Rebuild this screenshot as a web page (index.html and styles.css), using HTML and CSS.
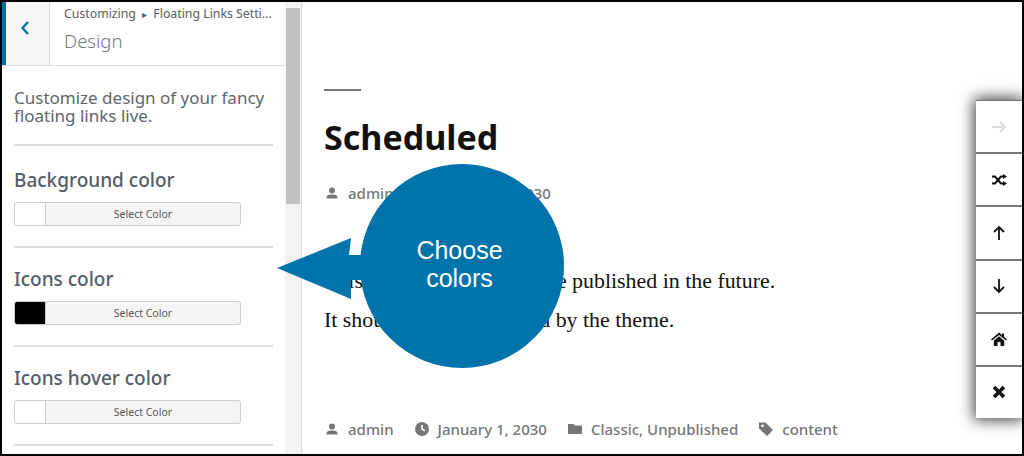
FILE: index.html
```html
<!DOCTYPE html>
<html lang="en">
<head>
	<meta charset="UTF-8">
	<title>Choose colors</title>
	<link rel="stylesheet" href="styles.css">
</head>
<body>
	<div class="frame">
		<aside class="sidebar">
			<div class="panel">
				<header class="panel-head">
					<a class="back" href="#">
						<svg width="10" height="16" viewBox="0 0 10 16"><path d="M8 2 L2.5 8 L8 14" fill="none" stroke="#0073aa" stroke-width="2.4"/></svg>
					</a>
					<div class="crumbs">
						<div class="crumb-line">Customizing <span class="crumb-sep">▸</span> Floating Links Setti...</div>
						<div class="panel-title">Design</div>
					</div>
				</header>
				<div class="panel-body">
					<p class="intro">Customize design of your fancy floating links live.</p>
					<section class="control">
						<h3>Background color</h3>
						<button class="picker"><span class="swatch"></span><span class="picker-text">Select Color</span></button>
					</section>
					<section class="control">
						<h3>Icons color</h3>
						<button class="picker"><span class="swatch swatch-black"></span><span class="picker-text">Select Color</span></button>
					</section>
					<section class="control">
						<h3>Icons hover color</h3>
						<button class="picker"><span class="swatch"></span><span class="picker-text">Select Color</span></button>
					</section>
				</div>
			</div>
			<div class="scrollbar"><div class="thumb"></div></div>
		</aside>

		<main class="preview">
			<div class="rule"></div>
			<h1>Scheduled</h1>
			<div class="meta meta-top">
				<span class="meta-item">
					<svg class="meta-icon" viewBox="0 0 16 16"><circle cx="8" cy="5.5" r="3"/><path d="M2.5 13.5 V12 C2.5 10.2 5.5 9.5 8 9.5 C10.5 9.5 13.5 10.2 13.5 12 V13.5 Z"/></svg>
					admin
				</span>
				<span class="meta-item">
					<svg class="meta-icon" viewBox="0 0 16 16"><path fill-rule="evenodd" d="M8 1 A7 7 0 1 0 8 15 A7 7 0 1 0 8 1 Z M7.2 4 H8.8 V7.6 L11.4 9.2 L10.6 10.5 L7.2 8.5 Z"/></svg>
					January 1, 2030
				</span>
			</div>
			<div class="post-text">
				<p>This post is scheduled to be published in the future.</p>
				<p>It should not be displayed by the theme.</p>
			</div>
			<div class="meta meta-bottom">
				<span class="meta-item">
					<svg class="meta-icon" viewBox="0 0 16 16"><circle cx="8" cy="5.5" r="3"/><path d="M2.5 13.5 V12 C2.5 10.2 5.5 9.5 8 9.5 C10.5 9.5 13.5 10.2 13.5 12 V13.5 Z"/></svg>
					admin
				</span>
				<span class="meta-item">
					<svg class="meta-icon" viewBox="0 0 16 16"><path fill-rule="evenodd" d="M8 1 A7 7 0 1 0 8 15 A7 7 0 1 0 8 1 Z M7.2 4 H8.8 V7.6 L11.4 9.2 L10.6 10.5 L7.2 8.5 Z"/></svg>
					January 1, 2030
				</span>
				<span class="meta-item">
					<svg class="meta-icon" viewBox="0 0 16 16"><path d="M1 3 H6.5 L8 4.5 H15 V13 H1 Z"/></svg>
					Classic, Unpublished
				</span>
				<span class="meta-item">
					<svg class="meta-icon" viewBox="0 0 16 16"><path fill-rule="evenodd" d="M1 1.5 H7.5 L15 9 L9 15 L1 7.5 Z M4.5 3.5 A1.3 1.3 0 1 0 4.5 6.1 A1.3 1.3 0 1 0 4.5 3.5 Z"/></svg>
					content
				</span>
			</div>
		</main>

		<nav class="float-bar">
			<a href="#" class="float-link">
				<svg width="16" height="16" viewBox="0 0 16 16"><path d="M1 8 H14 M9 3 L14 8 L9 13" fill="none" stroke="#ddd" stroke-width="2"/></svg>
			</a>
			<a href="#" class="float-link">
				<svg width="16" height="16" viewBox="0 0 16 16"><path d="M1 4.5 H4 L10 11.5 H13 M1 11.5 H4 L10 4.5 H13" fill="none" stroke="#111" stroke-width="2"/><path d="M12 2 L16 4.5 L12 7 Z M12 9 L16 11.5 L12 14 Z" fill="#111"/></svg>
			</a>
			<a href="#" class="float-link">
				<svg width="16" height="16" viewBox="0 0 16 16"><path d="M8 15 V2 M3 7 L8 2 L13 7" fill="none" stroke="#111" stroke-width="1.8"/></svg>
			</a>
			<a href="#" class="float-link">
				<svg width="16" height="16" viewBox="0 0 16 16"><path d="M8 1 V14 M3 9 L8 14 L13 9" fill="none" stroke="#111" stroke-width="1.8"/></svg>
			</a>
			<a href="#" class="float-link">
				<svg width="16" height="16" viewBox="0 0 16 16"><path d="M8 1.5 L11 4 V2.5 H13 V5.8 L16 8.5 L15 9.6 L8 4 L1 9.6 L0 8.5 Z M2.8 9.8 L8 5.2 L13.2 9.8 V15 H9.5 V11 H6.5 V15 H2.8 Z" fill="#111"/></svg>
			</a>
			<a href="#" class="float-link">
				<svg width="16" height="16" viewBox="0 0 16 16"><path d="M3 3 L13 13 M13 3 L3 13" fill="none" stroke="#111" stroke-width="3.6"/></svg>
			</a>
		</nav>

		<div class="callout">
			<svg class="callout-arrow" width="90" height="64" viewBox="0 0 90 64"><path d="M0 30 L74 0 L72 17 H90 V42 H74 V61 Z" fill="#0073aa"/></svg>
			<div class="callout-circle">Choose<br>colors</div>
		</div>
	</div>
</body>
</html>
```

FILE: styles.css
```css
* {
	margin: 0;
	padding: 0;
	box-sizing: border-box;
}
body {
	width: 1024px;
	height: 456px;
	overflow: hidden;
	background: #fff;
}
.frame {
	position: relative;
	display: flex;
	width: 1024px;
	height: 456px;
	border: 2px solid #000;
	overflow: hidden;
	background: #fff;
}

/* customizer sidebar */
.sidebar {
	display: flex;
	flex: none;
	width: 300px;
	height: 100%;
	border-right: 1px solid #ddd;
	font-family: "Noto Sans", "Open Sans", sans-serif;
	color: #555d66;
	overflow: hidden;
}
.panel {
	width: 283px;
	flex: none;
}
.panel-head {
	display: flex;
	height: 64px;
	border-bottom: 1px solid #ddd;
}
.back {
	display: flex;
	justify-content: center;
	align-items: flex-start;
	flex: none;
	width: 48px;
	padding: 18px 6px 0 0;
	border-left: 4px solid #0073aa;
	border-right: 1px solid #ddd;
	background: #f6f6f6;
}
.crumbs {
	padding: 3px 0 0 14px;
	white-space: nowrap;
}
.crumb-line {
	font-size: 12.3px;
	line-height: 17px;
}
.crumb-sep {
	font-size: 10px;
	margin: 0 3px;
}
.panel-title {
	margin-top: 6px;
	font-size: 18.5px;
	font-weight: 300;
	line-height: 24px;
	color: #72777c;
}
.panel-body {
	padding: 0 12px;
}
.intro {
	padding: 23px 0 19px;
	font-size: 17px;
	line-height: 18px;
	color: #5e666d;
	border-bottom: 2px solid #ddd;
}
.control {
	height: 99px;
	padding-top: 19px;
	border-bottom: 2px solid #ddd;
}
.control:nth-child(2) {
	height: 102px;
	padding-top: 22px;
}
.control h3 {
	font-size: 19px;
	font-weight: 500;
	line-height: 24px;
	margin-bottom: 10px;
}
.picker {
	display: flex;
	width: 227px;
	height: 24px;
	border: 1px solid #ccc;
	border-radius: 3px;
	overflow: hidden;
	background: #f5f5f5;
	font-family: inherit;
}
.swatch {
	flex: none;
	width: 31px;
	height: 100%;
	background: #fff;
	border-right: 1px solid #ccc;
}
.swatch-black {
	background: #000;
}
.picker-text {
	flex: 1;
	font-size: 10.5px;
	line-height: 22px;
	text-align: center;
	color: #555;
}
.scrollbar {
	flex: none;
	width: 16px;
	height: 100%;
	padding-top: 6px;
	background: #f3f3f3;
}
.thumb {
	width: 14px;
	height: 196px;
	margin: 0 auto;
	background: #c1c1c1;
}

/* post preview */
.preview {
	flex: 1;
	padding: 87px 0 0 22px;
	font-family: "Noto Sans", "Open Sans", sans-serif;
	color: #111;
}
.rule {
	width: 37px;
	height: 2px;
	background: #767676;
}
.preview h1 {
	margin-top: 24px;
	font-size: 34px;
	font-weight: 700;
	line-height: 44px;
}
.meta {
	display: flex;
	gap: 20px;
	font-size: 15px;
	font-weight: 500;
	line-height: 20px;
	color: #767676;
}
.meta-top {
	gap: 24px;
	margin-top: 24px;
}
.meta-item {
	display: flex;
	align-items: center;
	gap: 8px;
}
.meta-icon {
	width: 16px;
	height: 16px;
	fill: #767676;
}
.post-text {
	margin-top: 58px;
	font-family: "Liberation Serif", serif;
	font-size: 21.9px;
	line-height: 39px;
	color: #111;
}
.meta-bottom {
	margin-top: 80px;
}

/* floating links */
.float-bar {
	position: absolute;
	top: 98px;
	right: 0;
	display: flex;
	flex-direction: column;
	width: 46px;
	height: 318px;
	background: #fff;
	border-top: 1px solid #777;
	box-shadow: 0 0 14px 2px rgba(0, 0, 0, 0.75);
}
.float-link {
	display: flex;
	flex: 1;
	justify-content: center;
	align-items: center;
	border-bottom: 2px solid #777;
}
.float-link:last-child {
	border-bottom: 0;
}

/* annotation over the screenshot */
.callout {
	position: absolute;
	left: 275px;
	top: 162px;
	width: 287px;
	height: 204px;
}
.callout-arrow {
	position: absolute;
	left: 0;
	top: 74px;
}
.callout-circle {
	position: absolute;
	left: 83px;
	top: 0;
	display: flex;
	justify-content: center;
	align-items: center;
	width: 204px;
	height: 204px;
	padding: 0 5px 4px 0;
	border-radius: 50%;
	background: #0073aa;
	color: #fff;
	font-family: "Liberation Sans", Arial, sans-serif;
	font-size: 25px;
	line-height: 28px;
	text-align: center;
}
```
